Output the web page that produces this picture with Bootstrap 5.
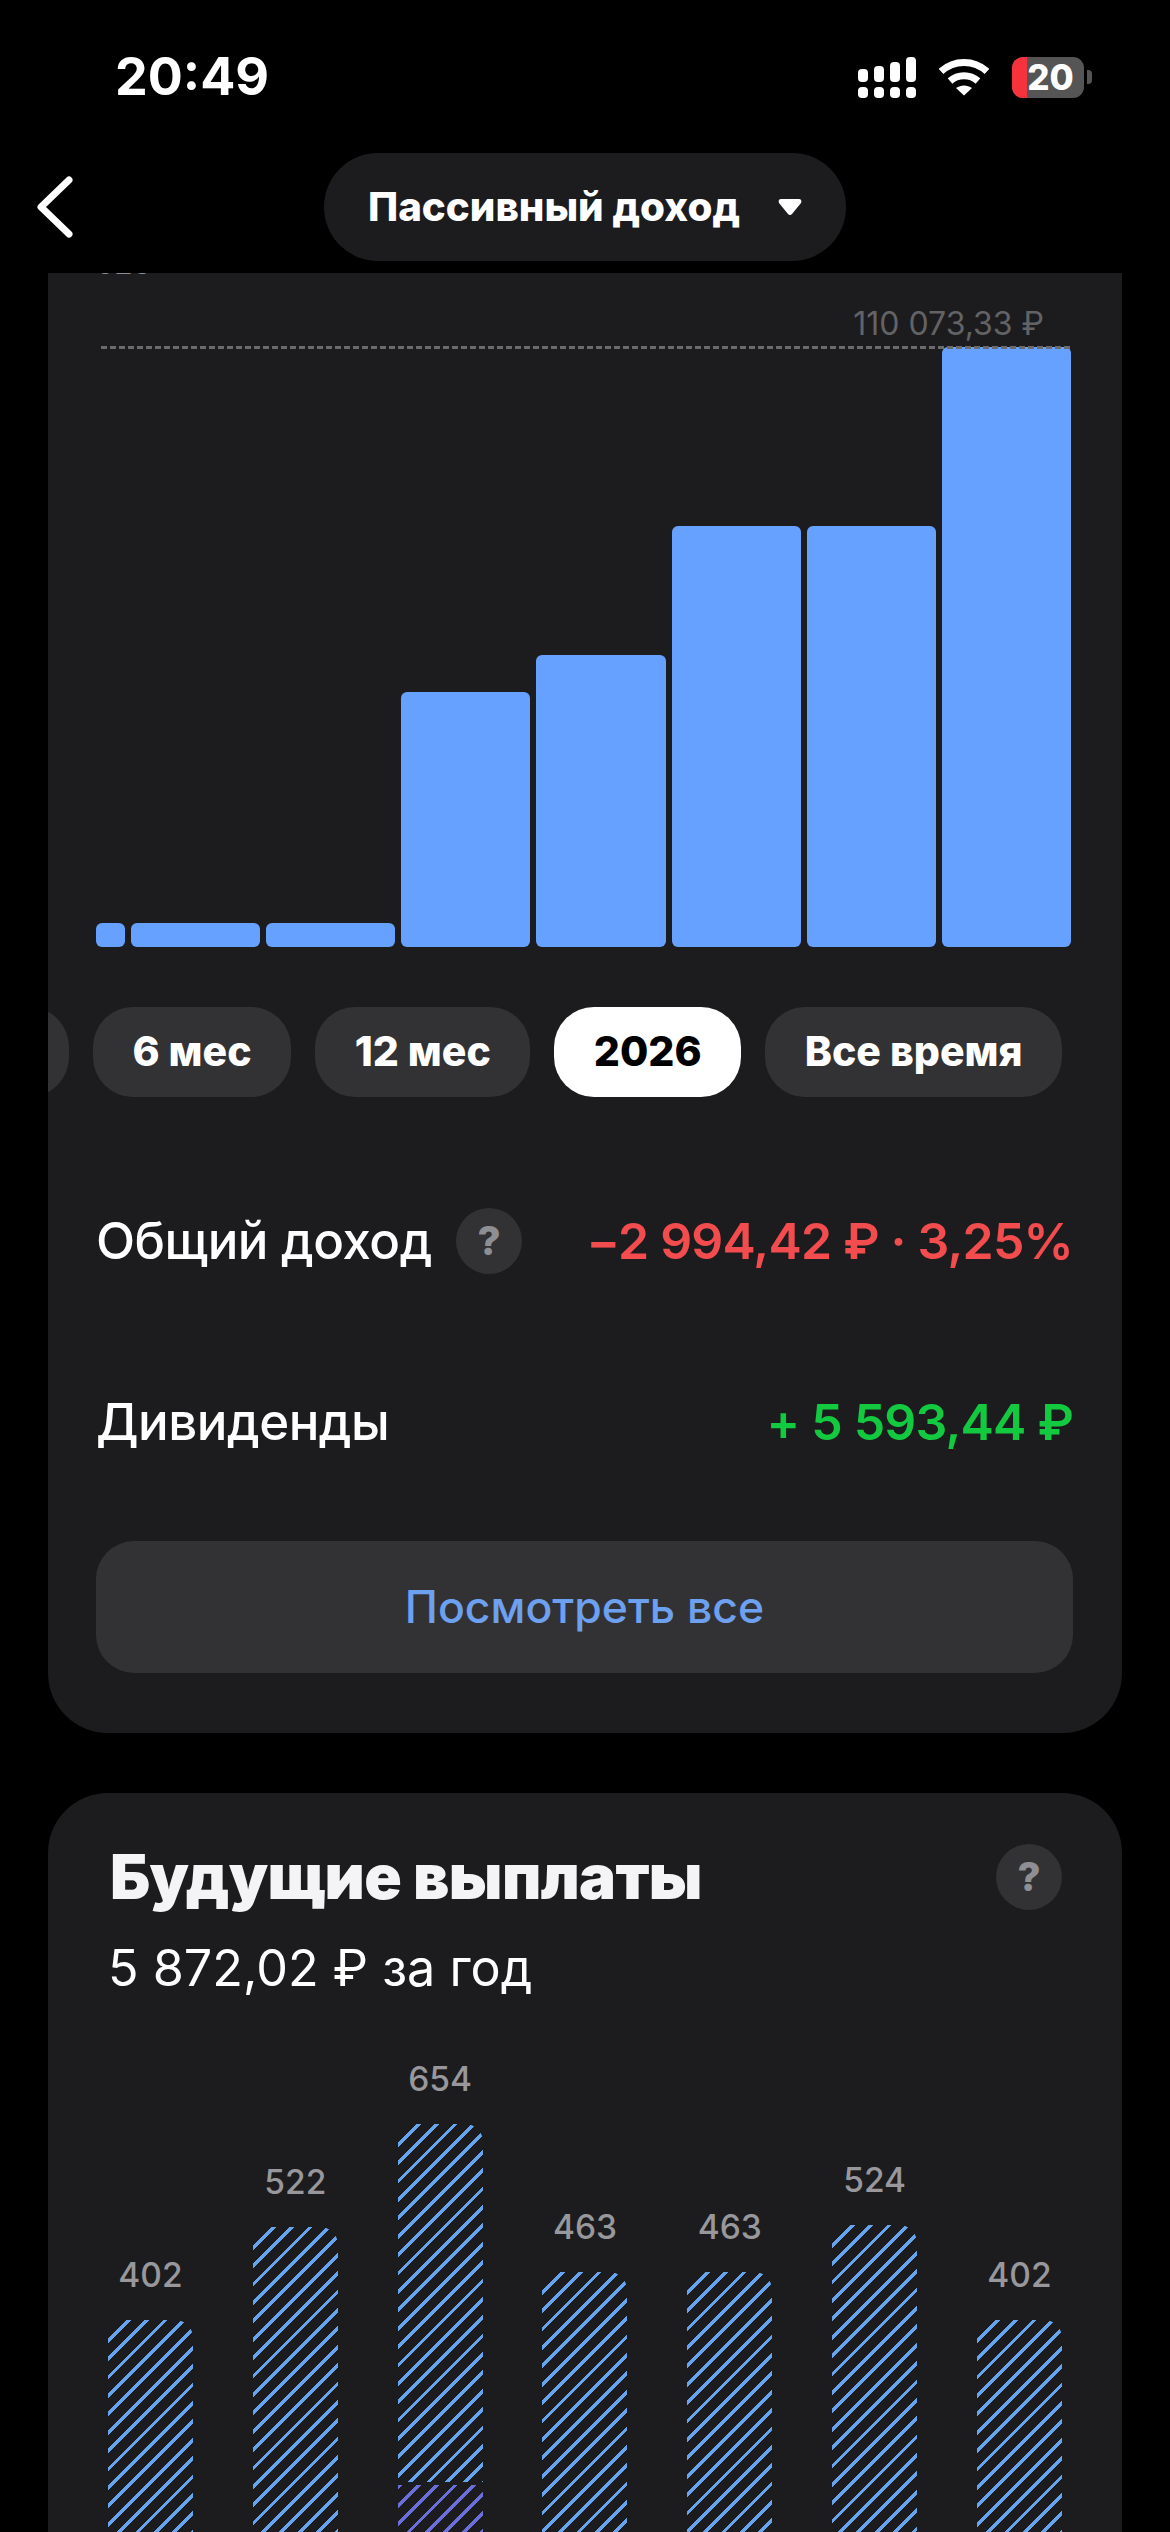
<!DOCTYPE html>
<html lang="ru">
<head>
    <meta charset="UTF-8">
    <meta name="viewport" content="width=device-width, initial-scale=1.0">
    <title>Пассивный доход</title>
    <link href="https://cdn.jsdelivr.net/npm/bootstrap@5.3.0/dist/css/bootstrap.min.css" rel="stylesheet">
    <style>
        html, body { background: #000; overflow: hidden; }
        body { font-family: Inter, "Liberation Sans", sans-serif; color: #fff; }

        .phone-shell { width: 1170px; height: 2532px; overflow: hidden; }

        /* status bar */
        .status-row { height: 153px; padding: 51px 78px 0 115px; }
        .status-time { font-size: 52px; font-weight: 700; line-height: 52px; }
        .status-icons { height: 52px; gap: 23px; }
        .batt-box { width: 72px; height: 41px; border-radius: 11px; background: #555; overflow: hidden; }
        .batt-fill { width: 15px; background: #f6323c; }
        .batt-num { left: 15px; top: 0; width: 47px; font-size: 35px; font-weight: 800; line-height: 41px; text-align: center; }
        .batt-nub { width: 5px; height: 14px; background: #555; border-radius: 0 4px 4px 0; margin-left: 3px; }

        /* top nav */
        .top-nav { height: 108px; margin-bottom: 12px; display: grid; grid-template-columns: 1fr auto 1fr; }
        .back-btn { padding-left: 36px; }
        .section-pill { width: 522px; background: #1c1c1e; border-radius: 54px; gap: 38px; font-size: 40.3px; font-weight: 800; }

        /* scroll area */
        .scroll-view { height: 2259px; overflow: hidden; padding: 0 48px; }
        .panel { background: #1c1c1e; border: 0; border-radius: 60px; overflow: hidden; color: #fff; }
        .panel-income { margin-top: -70px; padding: 0 49px 60px 48px; }
        .panel-future { margin-top: 60px; padding: 51px 60px 0 62px; }

        .axis-cut { height: 75px; display: flex; align-items: flex-end; font-size: 30px; line-height: 30px; color: #8e8e93; }
        .max-label { height: 69px; padding: 0 29px 5px 0; font-size: 32px; color: #636366; line-height: 36px; }

        .income-chart { height: 600px; padding-right: 2px; gap: 6px; }
        .max-line { left: 5px; right: 3px; top: -1px; border-top: 3px dashed #6b6b6e; }
        .solid-bar { flex: 1 1 0; background: #66a1ff; border-radius: 6px; }
        .solid-bar-first { flex: 0 0 29px; }

        .range-row { margin: 60px 0 0 -225px; gap: 24px; }
        .range-pill { flex: none; height: 90px; padding: 0 39.5px; border-radius: 40px; background: #323234; color: #fff; border: 0; font-size: 41px; font-weight: 800; }
        .range-pill:hover { background: #323234; color: #fff; }
        .range-pill-cut { width: 198px; }
        .range-pill-on, .range-pill-on:hover { background: #fff; color: #000; }

        .stat-row { height: 100px; font-size: 51px; font-weight: 500; letter-spacing: -0.5px; }
        .stat-row-one { margin-top: 94px; }
        .stat-row-two { margin-top: 81px; }
        .stat-val { font-weight: 600; font-size: 50px; letter-spacing: -0.8px; }
        .val-down { color: #f24c4f; }
        .val-up { color: #12c93f; }
        .help-dot { width: 66px; height: 66px; border-radius: 50%; background: #323234; color: #8e8e93; font-size: 40px; font-weight: 800; flex: none; }

        .view-all { margin-top: 69px; height: 132px; border-radius: 38px; background: #323234; color: #6ea0f0; border: 0; font-size: 44.5px; font-weight: 500; }
        .view-all:hover { background: #323234; color: #6ea0f0; }

        .future-title { font-size: 62px; font-weight: 900; line-height: 66px; color: #f4f4f6; letter-spacing: -0.6px; }
        .future-sum { margin: 28px 0 0 -2px; font-size: 50.3px; line-height: 60px; }

        .future-chart { height: 602px; width: 954px; margin-left: -2px; }
        .future-col { width: 85px; }
        .future-num { height: 40px; margin-bottom: 25px; font-size: 33.5px; font-weight: 500; line-height: 40px; color: #98989c; text-align: center; }
        .hatch-bar { flex: 1 1 0; border-radius: 18px 18px 0 0; background: repeating-linear-gradient(135deg, #66a5ee 0 3.4px, transparent 3.4px 13px); }
        .hatch-bar-low { margin-top: 3px; background: repeating-linear-gradient(135deg, #6a6fdc 0 3.4px, transparent 3.4px 13px); }
    </style>
</head>
<body>
    <div class="phone-shell">
        <!-- Status bar -->
        <div class="status-row d-flex justify-content-between align-items-start">
            <div class="status-time">20:49</div>
            <div class="status-icons d-flex align-items-center">
                <svg width="58" height="41" viewBox="0 0 58 41" fill="#fff">
                    <rect x="0" y="12" width="10" height="13" rx="4"/>
                    <rect x="16" y="9" width="10" height="16" rx="4"/>
                    <rect x="32" y="5" width="10" height="20" rx="4"/>
                    <rect x="48" y="0" width="10" height="25" rx="4"/>
                    <rect x="0" y="30" width="10" height="11" rx="4"/>
                    <rect x="16" y="30" width="10" height="11" rx="4"/>
                    <rect x="32" y="30" width="10" height="11" rx="4"/>
                    <rect x="48" y="30" width="10" height="11" rx="4"/>
                </svg>
                <svg width="50" height="38" viewBox="0 0 50 38" fill="none" stroke="#fff" stroke-width="7">
                    <path d="M2 13.5C15 1.5 35 1.5 48 13.5"/>
                    <path d="M11 23C19 16 31 16 39 23"/>
                    <path d="M25 37.5L17 30C22 26.5 28 26.5 33 30Z" fill="#fff" stroke="none"/>
                </svg>
                <div class="d-flex align-items-center">
                    <div class="batt-box position-relative d-flex align-items-stretch">
                        <div class="batt-fill"></div>
                        <div class="batt-num position-absolute">20</div>
                    </div>
                    <div class="batt-nub"></div>
                </div>
            </div>
        </div>

        <!-- Nav -->
        <div class="top-nav">
            <div class="back-btn d-flex align-items-center">
                <svg width="38" height="62" viewBox="0 0 38 62" fill="none" stroke="#fff" stroke-width="7" stroke-linecap="round" stroke-linejoin="round">
                    <path d="M33 4L5 31L33 58"/>
                </svg>
            </div>
            <div class="section-pill d-flex align-items-center justify-content-center">
                <span>Пассивный доход</span>
                <svg width="24" height="18" viewBox="0 0 24 18" fill="#fff"><path d="M3 1H21C23 1 24 3 23 5L14 16C13 17.4 11 17.4 10 16L1 5C0 3 1 1 3 1Z"/></svg>
            </div>
            <div></div>
        </div>

        <div class="scroll-view">
            <!-- Income card -->
            <div class="card panel panel-income">
                <div class="axis-cut">523</div>
                <div class="max-label d-flex justify-content-end align-items-end">110 073,33 ₽</div>
                <div class="income-chart position-relative d-flex align-items-end">
                    <div class="max-line position-absolute"></div>
                    <div class="solid-bar solid-bar-first" style="height: 24px"></div>
                    <div class="solid-bar" style="height: 24px"></div>
                    <div class="solid-bar" style="height: 24px"></div>
                    <div class="solid-bar" style="height: 255px"></div>
                    <div class="solid-bar" style="height: 292px"></div>
                    <div class="solid-bar" style="height: 421px"></div>
                    <div class="solid-bar" style="height: 421px"></div>
                    <div class="solid-bar" style="height: 600px"></div>
                </div>

                <div class="range-row d-flex">
                    <div class="range-pill range-pill-cut"></div>
                    <button class="btn range-pill">6 мес</button>
                    <button class="btn range-pill">12 мес</button>
                    <button class="btn range-pill range-pill-on">2026</button>
                    <button class="btn range-pill">Все время</button>
                </div>

                <div class="stat-row stat-row-one d-flex justify-content-between align-items-center">
                    <div class="d-flex align-items-center gap-4">
                        <span>Общий доход</span>
                        <span class="help-dot d-flex align-items-center justify-content-center">?</span>
                    </div>
                    <span class="stat-val val-down">−2 994,42 ₽ · 3,25%</span>
                </div>
                <div class="stat-row stat-row-two d-flex justify-content-between align-items-center">
                    <span>Дивиденды</span>
                    <span class="stat-val val-up">+ 5 593,44 ₽</span>
                </div>

                <button class="btn view-all w-100">Посмотреть все</button>
            </div>

            <!-- Future payouts card -->
            <div class="card panel panel-future">
                <div class="d-flex justify-content-between align-items-center">
                    <div class="future-title">Будущие выплаты</div>
                    <span class="help-dot d-flex align-items-center justify-content-center">?</span>
                </div>
                <div class="future-sum">5 872,02 ₽ за год</div>
                <div id="futureChart" class="future-chart d-flex justify-content-between align-items-end"></div>
            </div>
        </div>
    </div>

    <script src="https://cdn.jsdelivr.net/npm/bootstrap@5.3.0/dist/js/bootstrap.bundle.min.js"></script>
    <script>
        // bar height is the distance from its top to the chart floor
        const payouts = [
            { num: 402, h: 280 },
            { num: 522, h: 373 },
            { num: 654, h: 476, low: 115 },
            { num: 463, h: 328 },
            { num: 463, h: 328 },
            { num: 524, h: 375 },
            { num: 402, h: 280 }
        ];

        document.getElementById('futureChart').innerHTML = payouts.map(p => `
            <div class="future-col d-flex flex-column">
                <div class="future-num">${p.num}</div>
                <div class="d-flex flex-column" style="height: ${p.h}px">
                    <div class="hatch-bar"></div>
                    ${p.low ? `<div class="hatch-bar hatch-bar-low rounded-0" style="flex: 0 0 ${p.low}px"></div>` : ''}
                </div>
            </div>
        `).join('');
    </script>
</body>
</html>
